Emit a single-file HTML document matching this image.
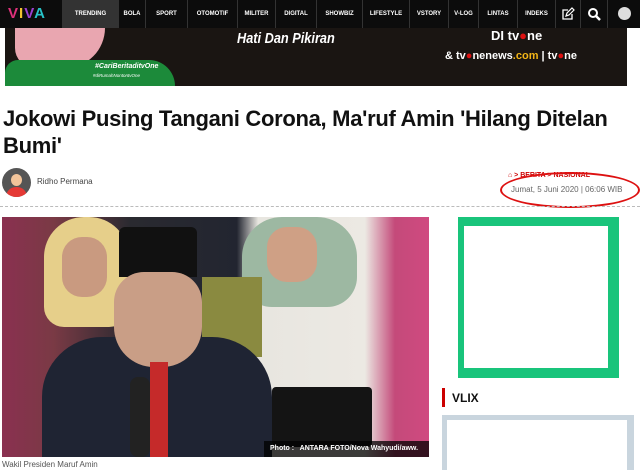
<!DOCTYPE html>
<html><head><meta charset="utf-8"><style>
*{margin:0;padding:0;box-sizing:border-box}
body{width:640px;height:470px;overflow:hidden;background:#fff;font-family:"Liberation Sans",sans-serif;position:relative}
.nav{position:absolute;left:0;top:0;width:640px;height:28px;background:#0c0c0c}
.nav .it{position:absolute;top:0;height:28px;color:#fff;font-size:6px;font-weight:bold;line-height:28px;text-align:center;border-left:1px solid #333}
.abs{position:absolute}
</style></head><body>
<div class="nav">
 <div class="abs" style="left:8px;top:6px;font-size:15px;font-weight:bold;letter-spacing:1px;line-height:16px"><span style="color:#e0307a">V</span><span style="color:#f2c230">I</span><span style="color:#9c3fd0">V</span><span style="color:#27c2c8">A</span></div>
 <div class="it" style="left:62px;width:56px;background:#333">TRENDING</div>
 <div class="it" style="left:118px;width:27px">BOLA</div>
 <div class="it" style="left:145px;width:42px">SPORT</div>
 <div class="it" style="left:187px;width:50px">OTOMOTIF</div>
 <div class="it" style="left:237px;width:38px">MILITER</div>
 <div class="it" style="left:275px;width:41px">DIGITAL</div>
 <div class="it" style="left:316px;width:46px">SHOWBIZ</div>
 <div class="it" style="left:362px;width:47px">LIFESTYLE</div>
 <div class="it" style="left:409px;width:39px">VSTORY</div>
 <div class="it" style="left:448px;width:30px">V-LOG</div>
 <div class="it" style="left:478px;width:39px">LINTAS</div>
 <div class="it" style="left:517px;width:38px">INDEKS</div>
 <div class="it" style="left:555px;width:25px"><svg width="14" height="14" viewBox="0 0 14 14" style="margin-top:7px"><path d="M11 7v5H2V3h5" fill="none" stroke="#fff" stroke-width="1.3"/><path d="M5 9l1-3 5-5 2 2-5 5z" fill="none" stroke="#fff" stroke-width="1.2"/></svg></div>
 <div class="it" style="left:580px;width:27px"><svg width="14" height="14" viewBox="0 0 14 14" style="margin-top:7px"><circle cx="6" cy="6" r="4" fill="none" stroke="#fff" stroke-width="2"/><path d="M9 9l4 4" stroke="#fff" stroke-width="2.5"/></svg></div>
 <div class="it" style="left:607px;width:33px"><div style="width:13px;height:13px;border-radius:50%;background:#ddd;margin:7px auto"></div></div>
</div>
<div class="abs" style="left:5px;top:28px;width:622px;height:58px;background:#1a1512">
 <div class="abs" style="left:10px;top:0;width:90px;height:40px;background:#e9a6b0;border-radius:0 0 40px 20px"></div>
 <div class="abs" style="left:0;top:32px;width:170px;height:26px;background:#1c8a3a;border-radius:40px 80px 0 0"></div>
 <div class="abs" style="left:90px;top:35px;color:#fff;font-size:7px;font-style:italic;font-weight:bold">#CariBeritaditvOne</div>
 <div class="abs" style="left:88px;top:45px;color:#fff;font-size:4.5px;font-style:italic">#diRumahNontontvOne</div>
 <div class="abs" style="left:232px;top:2px;color:#fff;font-size:15px;font-style:italic;font-weight:bold;transform:scaleX(.85);transform-origin:left">Hati Dan Pikiran</div>
 <div class="abs" style="left:486px;top:0;color:#fff;font-size:13px;font-weight:bold">DI tv<span style="color:#d11">●</span>ne</div>
 <div class="abs" style="left:440px;top:22px;color:#fff;font-size:11px;font-weight:bold">&amp; tv<span style="color:#d11">●</span>nenews<span style="color:#f2b517">.com</span> | tv<span style="color:#d11">●</span>ne</div>
</div>
<div class="abs" style="left:3px;top:105px;width:637px;font-size:22px;letter-spacing:-0.3px;font-weight:bold;line-height:27px;color:#111">Jokowi Pusing Tangani Corona, Ma'ruf Amin 'Hilang Ditelan Bumi'</div>
<div class="abs" style="left:2px;top:168px;width:29px;height:29px;border-radius:50%;background:#555;overflow:hidden"><div class="abs" style="left:9px;top:6px;width:11px;height:12px;border-radius:50%;background:#f2c49a"></div><div class="abs" style="left:4px;top:19px;width:21px;height:12px;border-radius:10px 10px 0 0;background:#e53935"></div></div>
<div class="abs" style="left:37px;top:177px;font-size:8px;color:#444">Ridho Permana</div>
<div class="abs" style="left:508px;top:172px;font-size:7px;color:#c00;font-weight:bold">⌂ &gt; BERITA &gt; NASIONAL</div>
<div class="abs" style="left:511px;top:185px;font-size:8px;color:#666">Jumat, 5 Juni 2020 | 06:06 WIB</div>
<div class="abs" style="left:500px;top:172px;width:140px;height:36px;border:2px solid #d11;border-radius:50%"></div>
<div class="abs" style="left:0;top:206px;width:640px;border-top:1px dashed #bbb"></div>
<div class="abs" style="left:2px;top:217px;width:427px;height:240px;background:linear-gradient(90deg,#8a3050 0%,#7a3a45 12%,#2a2a30 30%,#222530 55%,#e8e6e0 60%,#ece9e3 85%,#c44a7a 92%,#d04a80 100%);overflow:hidden">
 <div class="abs" style="left:42px;top:0;width:85px;height:110px;background:#e6cf8a;border-radius:40px 40px 20px 20px"></div>
 <div class="abs" style="left:60px;top:20px;width:45px;height:60px;background:#c99a80;border-radius:20px"></div>
 <div class="abs" style="left:240px;top:0;width:115px;height:90px;background:#9db8a2;border-radius:40px 40px 30px 30px"></div>
 <div class="abs" style="left:265px;top:10px;width:50px;height:55px;background:#cfa085;border-radius:20px"></div>
 <div class="abs" style="left:200px;top:60px;width:60px;height:80px;background:#8a8a40"></div>
 <div class="abs" style="left:40px;top:120px;width:230px;height:120px;background:#1f2433;border-radius:60px 60px 0 0"></div>
 <div class="abs" style="left:117px;top:10px;width:78px;height:50px;background:#111;border-radius:6px 6px 0 0"></div>
 <div class="abs" style="left:112px;top:55px;width:88px;height:95px;background:#c99e86;border-radius:30px 30px 40px 40px"></div>
 <div class="abs" style="left:148px;top:145px;width:18px;height:95px;background:#c52a2a"></div>
 <div class="abs" style="left:128px;top:160px;width:20px;height:80px;background:#222;border-radius:8px"></div>
 <div class="abs" style="left:270px;top:170px;width:100px;height:60px;background:#141414;border-radius:4px"></div>
 <div class="abs" style="right:0;bottom:0;height:16px;width:165px;background:rgba(0,0,0,.75);color:#fff;font-size:7px;font-weight:bold;line-height:16px;padding-left:6px">Photo :&nbsp;&nbsp; ANTARA FOTO/Nova Wahyudi/aww.</div>
</div>
<div class="abs" style="left:2px;top:460px;font-size:8px;color:#555">Wakil Presiden Maruf Amin</div>
<div class="abs" style="left:458px;top:217px;width:161px;height:161px;background:#19c47b"></div>
<div class="abs" style="left:464px;top:226px;width:144px;height:142px;background:#fff"></div>
<div class="abs" style="left:442px;top:388px;width:3px;height:19px;background:#c00"></div>
<div class="abs" style="left:452px;top:391px;font-size:12px;font-weight:bold;color:#111">VLIX</div>
<div class="abs" style="left:442px;top:415px;width:192px;height:55px;background:#c9d5de"></div>
<div class="abs" style="left:447px;top:420px;width:180px;height:50px;background:#fff"></div>
</body></html>
